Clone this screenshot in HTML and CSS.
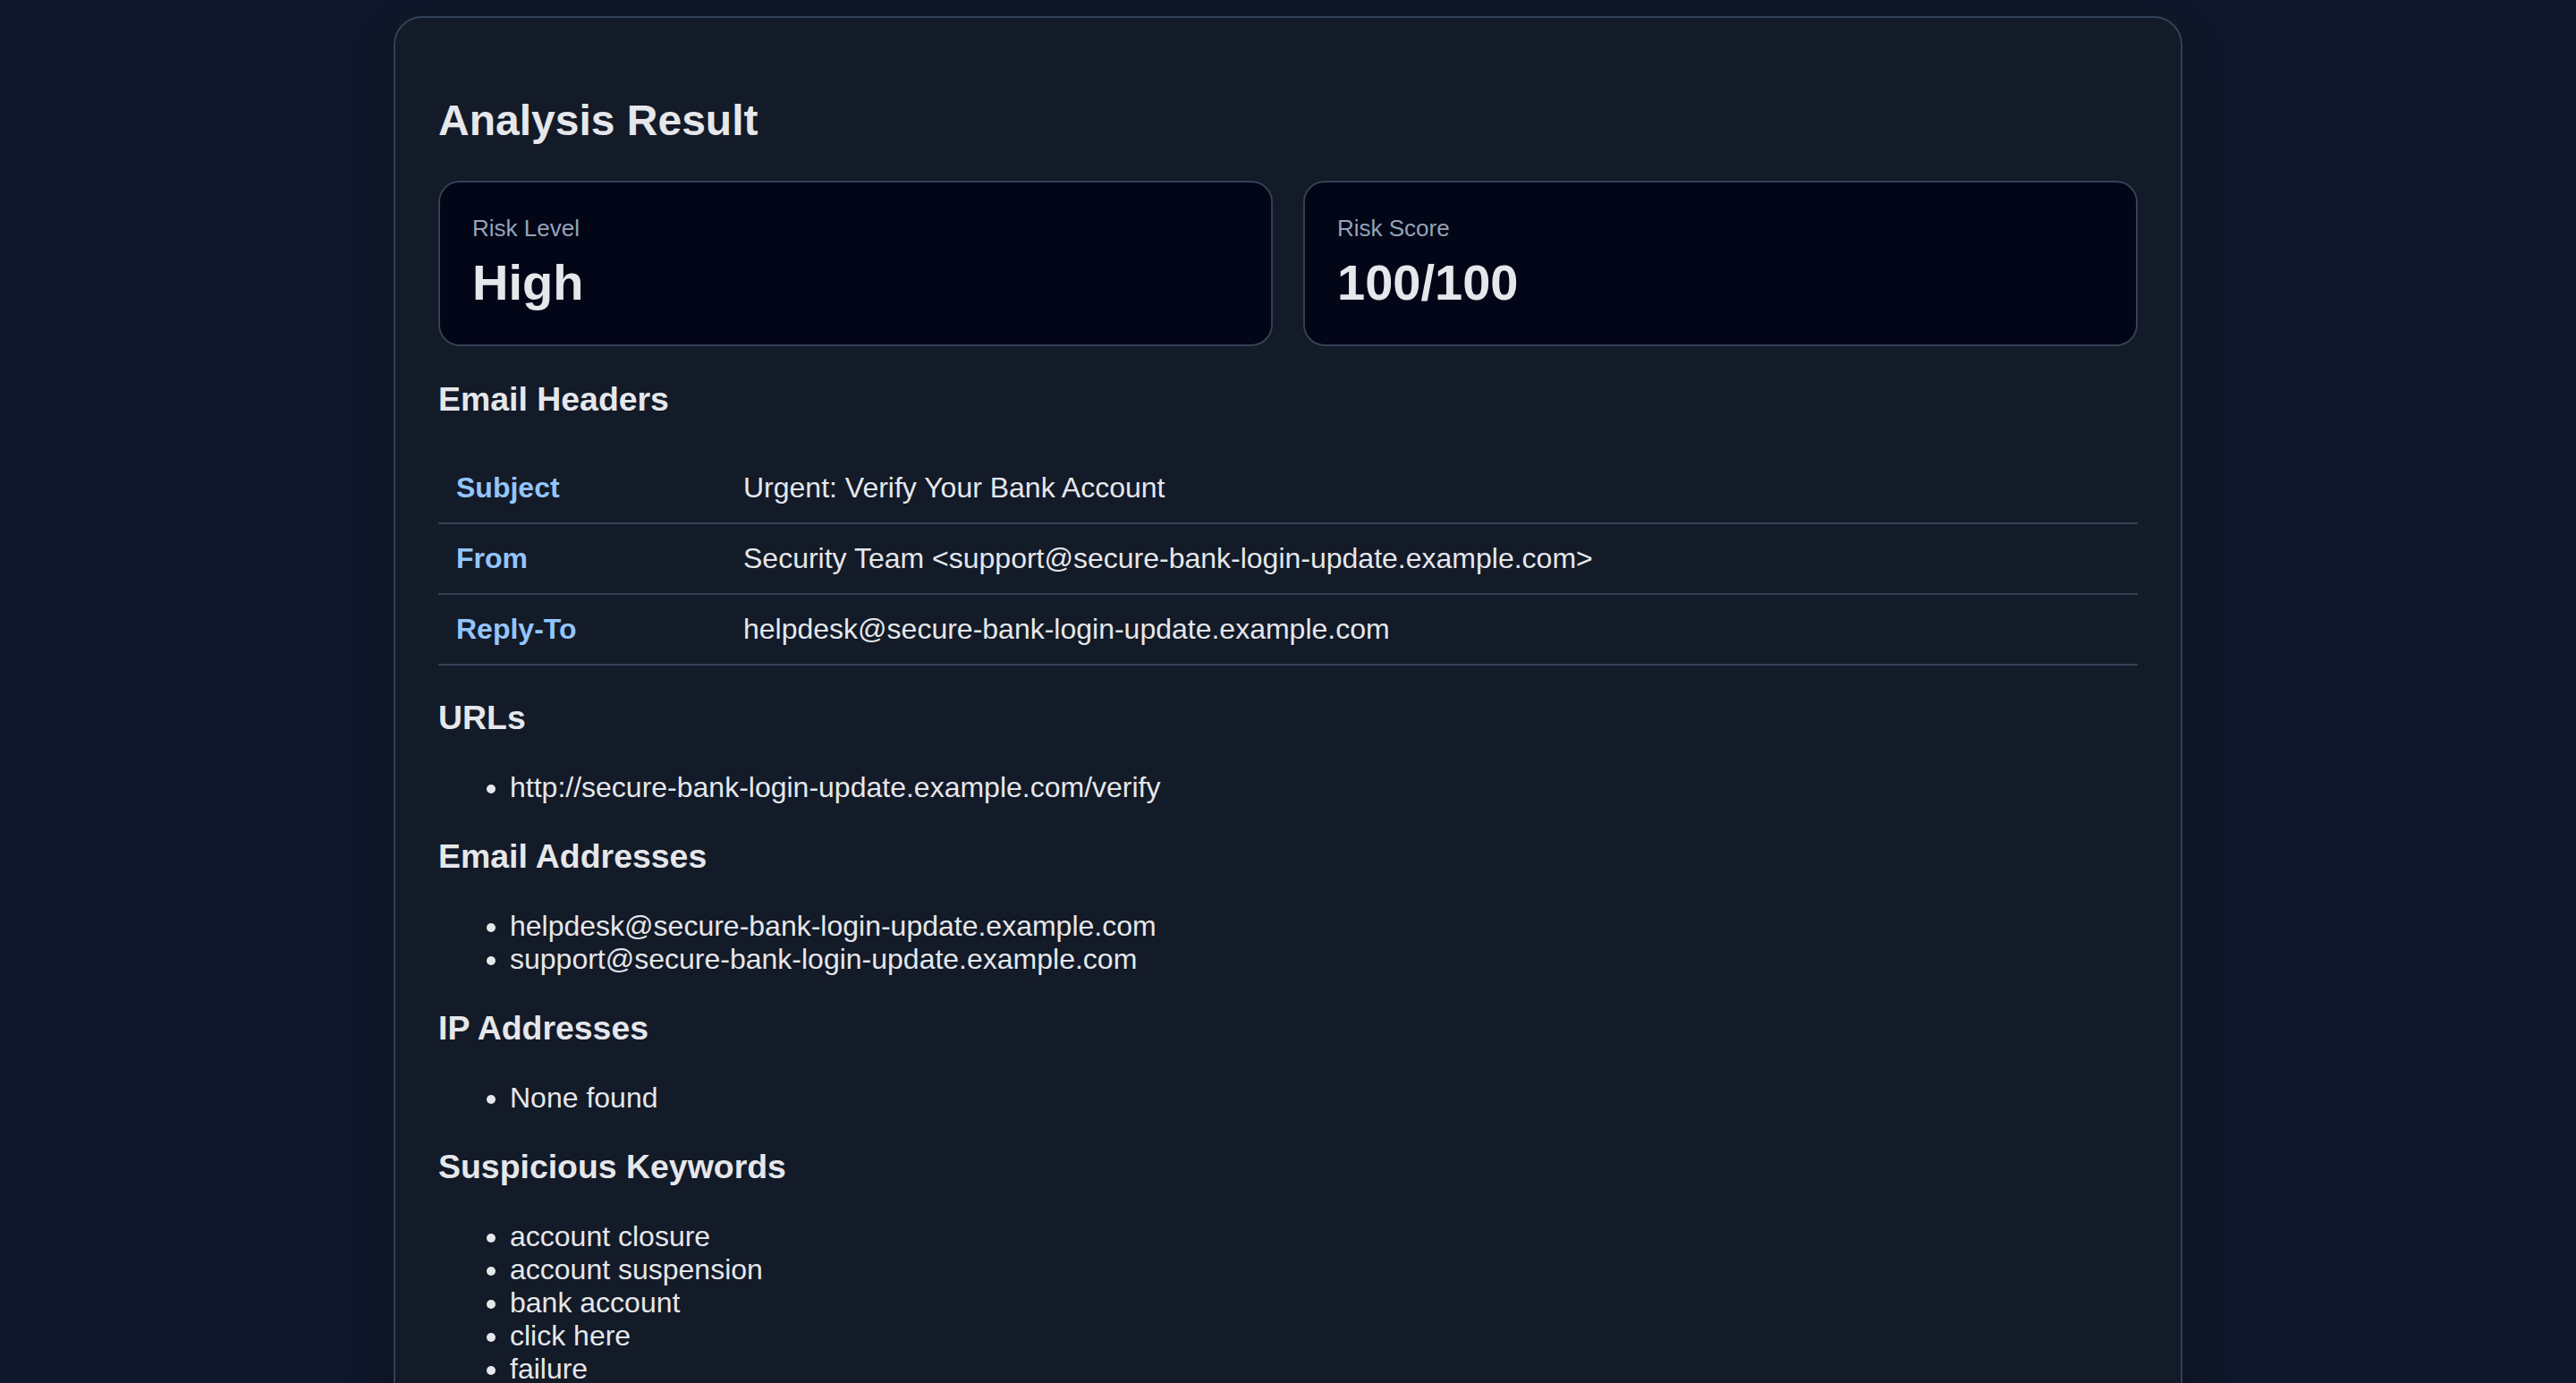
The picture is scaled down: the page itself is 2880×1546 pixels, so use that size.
FILE: index.html
```html
<!DOCTYPE html>
<html lang="en">
<head>
    <meta charset="UTF-8">
    <meta name="viewport" content="width=device-width, initial-scale=1.0">
    <title>Email Analysis Result</title>
    <link rel="stylesheet" href="styles.css">
</head>
<body>
    <div class="container">
        <h2>Analysis Result</h2>

        <div class="summary">
            <div class="stat">
                <div class="stat-label">Risk Level</div>
                <div class="stat-value">High</div>
            </div>
            <div class="stat">
                <div class="stat-label">Risk Score</div>
                <div class="stat-value">100/100</div>
            </div>
        </div>

        <h3>Email Headers</h3>
        <table class="headers">
            <tr>
                <th>Subject</th>
                <td>Urgent: Verify Your Bank Account</td>
            </tr>
            <tr>
                <th>From</th>
                <td>Security Team &lt;support@secure-bank-login-update.example.com&gt;</td>
            </tr>
            <tr>
                <th>Reply-To</th>
                <td>helpdesk@secure-bank-login-update.example.com</td>
            </tr>
        </table>

        <h3>URLs</h3>
        <ul>
            <li>http://secure-bank-login-update.example.com/verify</li>
        </ul>

        <h3>Email Addresses</h3>
        <ul>
            <li>helpdesk@secure-bank-login-update.example.com</li>
            <li>support@secure-bank-login-update.example.com</li>
        </ul>

        <h3>IP Addresses</h3>
        <ul>
            <li>None found</li>
        </ul>

        <h3>Suspicious Keywords</h3>
        <ul>
            <li>account closure</li>
            <li>account suspension</li>
            <li>bank account</li>
            <li>click here</li>
            <li>failure</li>
            <li>immediately</li>
            <li>password</li>
            <li>urgent</li>
            <li>verify your account</li>
        </ul>
    </div>
</body>
</html>
```

FILE: styles.css
```css
body {
    font-family: "Liberation Sans", Arial, sans-serif;
    font-size: 32px;
    margin: 0;
    padding: 18px 0;
    background: #0f172a;
    color: #e5e7eb;
}
.container {
    box-sizing: border-box;
    max-width: 2000px;
    margin: 0 auto;
    padding: 48px;
    background: #131a28;
    border: 2px solid #334155;
    border-radius: 32px;
    box-shadow: 0 20px 50px rgba(0, 0, 0, 0.25);
}
h2 {
    font-size: 48px;
    margin: 38.5px 0 40px;
}
h3 {
    font-size: 37.44px;
    margin: 37.44px 0;
}
.summary {
    display: grid;
    grid-template-columns: 1fr 1fr;
    gap: 34px;
    margin-bottom: 38.5px;
}
.stat {
    background: #020617;
    border: 2px solid #334155;
    border-radius: 24px;
    padding: 36px 34px 37px 36px;
}
.stat-label {
    font-size: 26px;
    color: #94a3b8;
    margin-bottom: 12px;
}
.stat-value {
    font-size: 56px;
    font-weight: bold;
}
.headers {
    width: 100%;
    margin-top: 39px;
    border-collapse: collapse;
}
.headers th,
.headers td {
    padding: 20px;
    text-align: left;
    border-bottom: 2px solid #334155;
}
.headers th {
    width: 281px;
    color: #93c5fd;
}
ul {
    margin: 32px 0;
    padding-left: 80px;
}
```
